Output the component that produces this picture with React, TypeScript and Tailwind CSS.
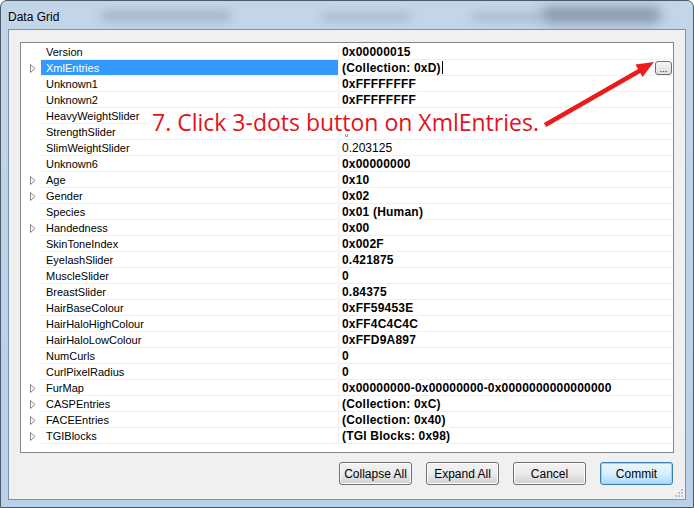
import React from 'react';

type Row = {
  name: string;
  value: string;
  expand?: boolean;
  plain?: boolean;
  selected?: boolean;
};

const rows: Row[] = [
  { name: 'Version', value: '0x00000015' },
  { name: 'XmlEntries', value: '(Collection: 0xD)', expand: true, selected: true },
  { name: 'Unknown1', value: '0xFFFFFFFF' },
  { name: 'Unknown2', value: '0xFFFFFFFF' },
  // values of these two sit under the annotation box
  { name: 'HeavyWeightSlider', value: '', plain: true },
  { name: 'StrengthSlider', value: '', plain: true },
  { name: 'SlimWeightSlider', value: '0.203125', plain: true },
  { name: 'Unknown6', value: '0x00000000' },
  { name: 'Age', value: '0x10', expand: true },
  { name: 'Gender', value: '0x02', expand: true },
  { name: 'Species', value: '0x01 (Human)' },
  { name: 'Handedness', value: '0x00', expand: true },
  { name: 'SkinToneIndex', value: '0x002F' },
  { name: 'EyelashSlider', value: '0.421875' },
  { name: 'MuscleSlider', value: '0' },
  { name: 'BreastSlider', value: '0.84375' },
  { name: 'HairBaseColour', value: '0xFF59453E' },
  { name: 'HairHaloHighColour', value: '0xFF4C4C4C' },
  { name: 'HairHaloLowColour', value: '0xFFD9A897' },
  { name: 'NumCurls', value: '0' },
  { name: 'CurlPixelRadius', value: '0' },
  { name: 'FurMap', value: '0x00000000-0x00000000-0x0000000000000000', expand: true },
  { name: 'CASPEntries', value: '(Collection: 0xC)', expand: true },
  { name: 'FACEEntries', value: '(Collection: 0x40)', expand: true },
  { name: 'TGIBlocks', value: '(TGI Blocks: 0x98)', expand: true },
];

const ExpandGlyph = () => (
  <svg width="6" height="9" viewBox="0 0 6 9">
    <polygon points="0.5,0.5 5,4.5 0.5,8.5" fill="#fff" stroke="#8a8a8a" strokeWidth="1" />
  </svg>
);

const GridRow: React.FC<{ row: Row }> = ({ row }) => (
  <div className="flex h-[16px]">
    <div className="w-[20px] flex items-center justify-center pl-[4px]">
      {row.expand ? <ExpandGlyph /> : null}
    </div>
    <div
      className={`w-[298px] h-[16px] pl-[5px] text-[11px] leading-[16px] border-b border-r border-[#f0f0f0] whitespace-nowrap ${
        row.selected ? 'bg-[#3399ff] text-white' : 'text-black'
      }`}
    >
      {row.name}
    </div>
    <div className="flex-1 h-[16px] pl-[3px] pr-[1px] flex items-center border-b border-[#f0f0f0] text-[12px] leading-[16px] whitespace-nowrap">
      <span className={row.plain ? 'font-normal text-black' : 'font-bold text-black tracking-[0.2px]'}>{row.value}</span>
      {row.selected ? (
        <>
          <span className="w-px h-[13px] bg-black ml-[1px]" />
          <span className="ml-auto mt-[1px] w-[17px] h-[14px] rounded-[3px] border border-[#707070] bg-gradient-to-b from-[#f6f6f6] to-[#dcdcdc] flex items-end justify-center text-[9px] leading-[10px] text-black">
            ...
          </span>
        </>
      ) : null}
    </div>
  </div>
);

const WinButton: React.FC<{ label: string; focused?: boolean }> = ({ label, focused }) => (
  <button
    className={`w-[73px] h-[23px] rounded-[3px] border text-[12px] text-black bg-gradient-to-b ${
      focused
        ? 'border-[#3c7fb1] from-[#eaf6fd] via-[#d9f0fc] to-[#a7d9f5] shadow-[inset_0_0_0_1px_#9fd2ef]'
        : 'border-[#707070] from-[#f2f2f2] via-[#ebebeb] to-[#cfcfcf] shadow-[inset_0_0_0_1px_#fcfcfc]'
    }`}
  >
    {label}
  </button>
);

export default function App() {
  return (
    <div
      className="relative w-[694px] h-[508px] overflow-hidden rounded-t-[7px] border border-[#4b5a6b] bg-gradient-to-b from-[#c3d5e8] to-[#b9d0e9]"
      style={{ fontFamily: '"Liberation Sans", Arial, sans-serif' }}
    >
      {/* glass smudges in the title bar */}
      <div className="absolute left-[100px] top-[10px] w-[130px] h-[10px] rounded-full bg-[#8e9eb2] blur-[5px] opacity-60" />
      <div className="absolute left-[320px] top-[12px] w-[90px] h-[8px] rounded-full bg-[#8e9eb2] blur-[5px] opacity-50" />
      <div className="absolute left-[470px] top-[12px] w-[70px] h-[8px] rounded-full bg-[#8e9eb2] blur-[5px] opacity-50" />
      <div className="absolute left-[540px] top-[6px] w-[120px] h-[16px] rounded-full bg-[#6f7f92] blur-[6px] opacity-70" />

      <div className="relative h-[28px] pl-[7px] pt-[7px] text-[12px] text-black">Data Grid</div>

      <div className="relative ml-[7px] w-[678px] h-[471px] border border-[#7d92aa] bg-[#f0f0f0] flex flex-col">
        <div className="ml-[11px] mt-[12px] w-[654px] h-[411px] border border-[#828790] bg-white pt-px">
          {rows.map((row) => (
            <GridRow key={row.name} row={row} />
          ))}
        </div>
        <div className="flex justify-end gap-[14px] mr-[12px] mt-[9px]">
          <WinButton label="Collapse All" />
          <WinButton label="Expand All" />
          <WinButton label="Cancel" />
          <WinButton label="Commit" focused />
        </div>
        <div className="absolute right-[2px] bottom-[2px] grid grid-cols-3 gap-[1px] opacity-60">
          {[0, 0, 1, 0, 1, 1, 1, 1, 1].map((v, i) => (
            <span key={i} className={`w-[2px] h-[2px] ${v ? 'bg-[#9aa4ae]' : ''}`} />
          ))}
        </div>
      </div>

      {/* annotation */}
      <div
        className="absolute left-[148px] top-[107px] h-[28px] pl-[3px] pr-[4px] bg-white text-[23px] leading-[28px] text-[#e3121c] whitespace-nowrap"
        style={{ fontFamily: '"Open Sans", sans-serif' }}
      >
        7. Click 3-dots button on XmlEntries.
      </div>
      <span className="absolute left-[344px] top-[133px] w-[3px] h-[3px] rounded-b-full border-x border-b border-[#999]" />
      <svg className="absolute left-0 top-0" width="694" height="508" viewBox="0 0 694 508">
        <line x1="544" y1="124" x2="640" y2="69" stroke="#ec1b1b" strokeWidth="4.5" />
        <polygon points="653,61 641.5,76 634.5,63.5" fill="#ec1b1b" />
      </svg>
    </div>
  );
}
